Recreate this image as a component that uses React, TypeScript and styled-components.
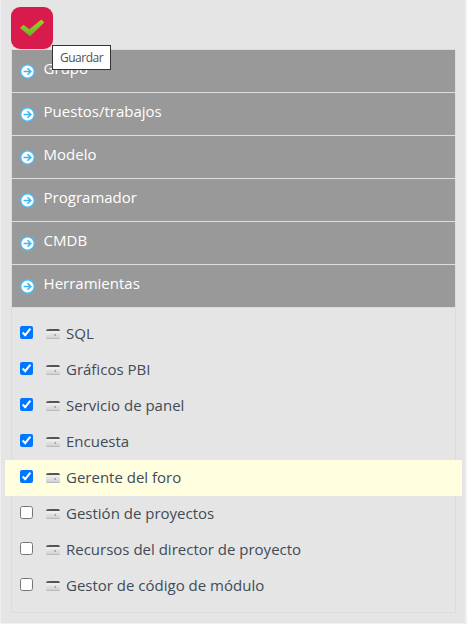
import React, { useState } from "react";
import styled, { createGlobalStyle } from "styled-components";

const GlobalStyle = createGlobalStyle`
  * { box-sizing: border-box; }
  body { margin: 0; background: #f0f0f0; font-family: "Open Sans", "Noto Sans", sans-serif; }
`;

const Panel = styled.main`
  width: 464px;
  height: 623px;
  margin-left: 1px;
  padding: 7px 9px 0 10px;
  background: #e5e5e5;
`;

const SaveBar = styled.div`
  position: relative;
  height: 42px;
`;

const SaveButton = styled.button`
  display: flex;
  width: 42px;
  height: 42px;
  padding: 0;
  border: 0;
  border-radius: 9px;
  background: #d81b4c;
`;

const Tooltip = styled.div`
  position: absolute;
  left: 41px;
  top: 38px;
  width: 59px;
  height: 25px;
  padding-left: 7px;
  border: 1px solid #333;
  background: #fff;
  color: #505050;
  font-size: 12px;
  letter-spacing: -0.5px;
  line-height: 24px;
  z-index: 1;
`;

const Accordion = styled.section`
  width: 445px;
  height: 564px;
  border: 1px solid #dcdcdc;
`;

const Header = styled.div<{ $last?: boolean }>`
  display: flex;
  height: ${(p) => (p.$last ? 42 : 43)}px;
  padding-left: 8px;
  border-bottom: ${(p) => (p.$last ? "0" : "1px solid #dedede")};
  background: #999;
`;

const HeaderIcon = styled.svg`
  flex: none;
  width: 15px;
  height: 15px;
  margin: 14px 8.6px 0 0;
`;

const HeaderLabel = styled.span`
  color: #fff;
  font-size: 15px;
  line-height: 36px;
`;

const List = styled.div`
  padding-top: 8px;
  border-top: 1px solid #dcdcdc;
`;

const Row = styled.label<{ $active?: boolean }>`
  display: flex;
  height: 36px;
  margin: 0 -7px;
  padding-left: 15px;
  background: ${(p) => (p.$active ? "#ffffdf" : "transparent")};
`;

const Checkbox = styled.input`
  flex: none;
  width: 13px;
  height: 13px;
  margin: 10px 13px 0 0;
`;

const DriveIcon = styled.svg`
  flex: none;
  width: 14px;
  height: 12px;
  margin: 12px 6px 0 0;
`;

const RowLabel = styled.span`
  color: #414b57;
  font-size: 15px;
  line-height: 35px;
`;

const groups = ["Grupo", "Puestos/trabajos", "Modelo", "Programador", "CMDB", "Herramientas"];

const tools = [
  { name: "SQL", on: true },
  { name: "Gráficos PBI", on: true },
  { name: "Servicio de panel", on: true },
  { name: "Encuesta", on: true },
  { name: "Gerente del foro", on: true },
  { name: "Gestión de proyectos", on: false },
  { name: "Recursos del director de proyecto", on: false },
  { name: "Gestor de código de módulo", on: false },
];

const Arrow = () => (
  <HeaderIcon viewBox="0 0 15 15">
    <circle cx="7.5" cy="7.5" r="6.7" fill="#fff" stroke="#48bdf9" strokeWidth="1.3" />
    <path d="M3.6 7.5h7M7.5 4.2l3.300 3.300-3.300 3.300" fill="none" stroke="#3bb5f8" strokeWidth="1.6" />
  </HeaderIcon>
);

const Drive = () => (
  <DriveIcon viewBox="0 0 14 12">
    <path d="M1 3h12l1 1v6l-1 1H1l-1-1V4z" fill="#e4e4e4" />
    <rect x="0" y="3" width="14" height="2" fill="#ededed" />
    <rect x="0" y="7" width="14" height="2" fill="#dadada" />
    <rect x="0" y="9" width="14" height="1" fill="#d2d2d2" />
    <rect x="0.500" y="10" width="13" height="1" fill="#bbbbbb" />
    <path d="M1 1h12l1 2H0z" fill="#555553" />
    <rect x="1" y="1" width="2" height="1" fill="#77724c" />
    <rect x="8" y="6" width="2" height="2" fill="#a9cbd9" />
    <rect x="9" y="6" width="1" height="2" fill="#72b1d0" />
  </DriveIcon>
);

export default function App() {
  const [checked, setChecked] = useState(tools.map((t) => t.on));
  const toggle = (index: number) =>
    setChecked((values) => values.map((v, i) => (i === index ? !v : v)));

  return (
    <>
      <GlobalStyle />
      <Panel>
        <SaveBar>
          <SaveButton aria-label="Guardar">
            <svg width="42" height="42" viewBox="0 0 42 42">
              <defs>
                <linearGradient id="tick" x1="0" y1="0" x2="0" y2="1">
                  <stop offset="0" stopColor="#9bd51c" />
                  <stop offset="1" stopColor="#65b32d" />
                </linearGradient>
              </defs>
              <path d="M9 21 12.500 17.800 18.300 22.300 30.500 12.500 33.300 15.500 19 29.300z" fill="url(#tick)" />
            </svg>
          </SaveButton>
          <Tooltip>Guardar</Tooltip>
        </SaveBar>
        <Accordion>
          {groups.map((name, i) => (
            <Header key={name} $last={i === groups.length - 1}>
              <Arrow />
              <HeaderLabel>{name}</HeaderLabel>
            </Header>
          ))}
          <List>
            {tools.map((tool, i) => (
              <Row key={tool.name} $active={tool.name === "Gerente del foro"}>
                <Checkbox type="checkbox" checked={checked[i]} onChange={() => toggle(i)} />
                <Drive />
                <RowLabel>{tool.name}</RowLabel>
              </Row>
            ))}
          </List>
        </Accordion>
      </Panel>
    </>
  );
}
